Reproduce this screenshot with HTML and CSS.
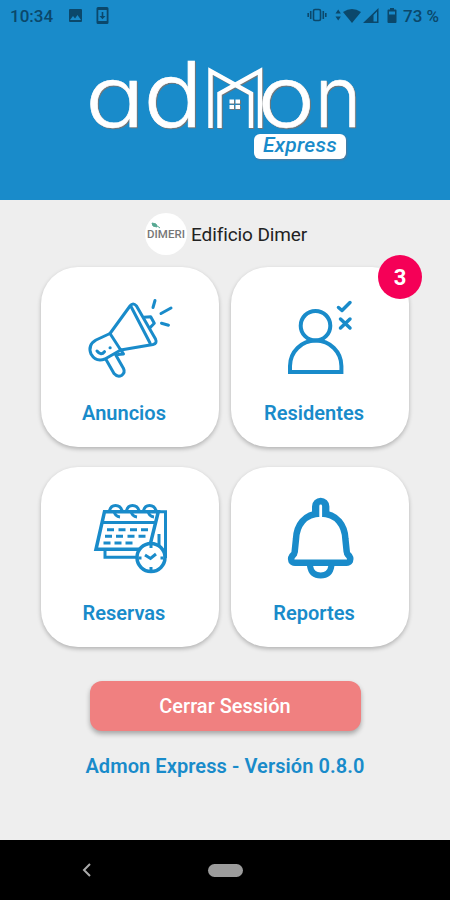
FILE: index.html
```html
<!DOCTYPE html>
<html lang="es">
<head>
    <meta charset="UTF-8">
    <meta name="viewport" content="width=device-width, initial-scale=1.0">
    <title>Admon Express</title>
    <link rel="stylesheet" href="styles.css">
</head>
<body>
    <header>
        <div class="status-bar">
            <span class="time">10:34</span>
            <svg class="status-left" width="44" height="20" viewBox="0 0 44 20">
                <path fill-rule="evenodd" d="M3 3h11q1 0 1 1v11q0 1-1 1H3q-1 0-1-1V4q0-1 1-1zM3 14h11l-3.500-5-2.500 3.500-2-2.500z"/>
                <path fill-rule="evenodd" d="M31 1h9q1.500 0 1.500 1.500v14q0 1.500-1.500 1.500h-9q-1.500 0-1.500-1.500v-14Q29.500 1 31 1zM31.300 4v11h8.400V4zM34.700 6h1.600v4h2.200l-3 3.300-3-3.300h2.200z"/>
            </svg>
            <svg class="status-right" width="92" height="20" viewBox="0 0 92 20">
                <g fill="none" stroke="currentColor" stroke-width="1.600">
                    <rect x="6.500" y="3.500" width="7" height="11" rx="1.500"/>
                    <path d="M3.700 5v8M1.200 7v4M16.300 5v8M18.800 7v4"/>
                </g>
                <path d="M28.500 7.500l2.700-4 2.700 4zM28.500 10.500l2.700 4 2.700-4z"/>
                <path d="M36 6q9-6 18 0L45 17z"/>
                <path fill-rule="evenodd" d="M56 17L71.500 2v15zM66.500 9v6.500H70V5.500z"/>
                <path fill-rule="evenodd" d="M83 2h4v1.500h1.500q1 0 1 1v11.500q0 1-1 1h-7q-1 0-1-1V4.500q0-1 1-1H83zM82 5.500v3h6v-3z"/>
            </svg>
            <span class="battery">73 %</span>
        </div>
        <div class="brand">
            <svg class="logo" width="270" height="78" viewBox="0 0 270 78">
                <text class="logo-letter" transform="translate(-4.800 73) scale(1.160 1)">a</text>
                <text class="logo-letter" transform="translate(53.500 73) scale(1.160 1.070)">d</text>
                <g class="logo-house">
                    <path d="M120.500 74V17L161 39.500V74"/>
                    <path d="M170 74V17l-40.500 22.500V74"/>
                    <path class="panes" d="M139.500 45.500h4.500v4h-4.500zM145.500 45.500h4.500v4h-4.500zM139.500 51h4.500v4h-4.500zM145.500 51h4.500v4h-4.500z"/>
                </g>
                <text class="logo-letter" transform="translate(167.500 73) scale(1.140 1)">o</text>
                <text class="logo-letter" transform="translate(224.500 73) scale(0.940 1)">n</text>
            </svg>
            <span class="express">Express</span>
        </div>
    </header>

    <main>
        <div class="building">
            <span class="avatar">
                <svg width="10" height="7" viewBox="0 0 10 7"><path d="M1 1l4 1 1 3-4-1zM5 3l4 3" fill="#56a892" stroke="#56a892"/></svg>
                <span>DIMERI</span>
            </span>
            <span class="building-name">Edificio Dimer</span>
        </div>

        <div class="menu">
            <!-- Anuncios -->
            <div class="card">
                <svg class="icon" width="90" height="90" viewBox="0 0 90 90">
                    <g stroke-width="3">
                        <path d="M25 41.500L45 14q3-4 6.500 0L70.500 47q2 4.500-2.500 5.500L35.700 58z"/>
                        <path d="M46 14.500L65 51"/>
                        <path d="M25 41.500L11 48Q2.500 53 6 62q5 8.500 14 5l15.700-9"/>
                        <path d="M21 67.500l8 14q3.500 4 7.500 2 4-3 2-7l-8-14"/>
                        <path d="M33 62.500l5.500-.5-2.500-4M59 25.300l6.700-.6 3.600 6.600-4.300 4.400"/>
                        <path d="M12 59q4 5 7.500.700M25 55.700h.2M70 8.500l-2 7M76 21.500l10-5.500M76.500 31.200l7 2"/>
                    </g>
                </svg>
                <span class="label">Anuncios</span>
            </div>
            <!-- Residentes -->
            <div class="card">
                <svg class="icon" width="90" height="90" viewBox="0 0 90 90">
                    <g stroke-width="4">
                        <circle cx="40.500" cy="33.700" r="14.800"/>
                        <path class="square" d="M15 80v-6a25.700 25.500 0 0 1 51.400 0v6z"/>
                        <path d="M63.500 15.500l3.500 3 8-8M65.500 27l9.500 9M75 27l-9.500 9" stroke-width="3.500"/>
                    </g>
                </svg>
                <span class="label">Residentes</span>
                <span class="badge">3</span>
            </div>
            <!-- Reservas -->
            <div class="card">
                <svg class="icon" width="90" height="90" viewBox="0 0 90 90">
                    <g class="square" stroke-width="3.500">
                        <path d="M19.500 19.700h53.800L64 57.300H11z"/>
                        <path d="M17 30.500h53M72 19.700h8.500V66M20 58v7.300h32M74 42v12" stroke-width="3"/>
                        <path d="M22 37.700h7M33.500 37.700h7M45 37.700h7M56 37.700h7M20 44.300h7M31 44.300h7M42.500 44.300h7M53.500 44.300h7M18.500 51h7M29.500 51h7M40.500 51h7" stroke-width="3"/>
                        <path d="M24.500 19q1-5.500 6-5.500t6.500 5M29 19q1 5.500 6 6M41.500 19q1-5.500 6-5.500t6.500 5M46 19q1 5.500 6 6M58.500 19q1-5.500 6-5.500t6.500 5M63 19q1 5.500 6 6" stroke-width="3"/>
                        <circle cx="66" cy="65.500" r="14" fill="#fff"/>
                        <path d="M60 63l5.500 3.500L71 62M66 53v3M66 75v3M53.500 66h3M75.500 66h3" stroke-width="3"/>
                    </g>
                </svg>
                <span class="label">Reservas</span>
            </div>
            <!-- Reportes -->
            <div class="card">
                <svg class="icon" width="90" height="90" viewBox="0 0 90 90">
                    <path d="M37 25V14.500a8.700 8.700 0 0 1 17.400 0V25z" fill="#198bca" stroke="none"/>
                    <path d="M45.700 21.500C29 21.500 21.500 34 21 47L19.500 61.500q-4.500 4-3 7.500 1 1.800 3.500 1.800h51.400q2.500 0 3.500-1.800 1.500-3.500-3-7.500L70.400 47C69.900 34 62.400 21.500 45.700 21.500z" stroke-width="6.500"/>
                    <path d="M21 66.500h49.400l-2-6H23z" fill="#fff" stroke="none"/>
                    <path d="M45.700 14v13" stroke="#fff" stroke-width="2.800"/>
                    <path d="M35 74q1.500 9.500 10.700 9.500T56.400 74" stroke-width="6"/>
                </svg>
                <span class="label">Reportes</span>
            </div>
        </div>

        <button type="button" class="logout">Cerrar Sessión</button>
        <p class="version">Admon Express - Versión 0.8.0</p>
    </main>

    <nav class="nav-bar">
        <svg class="back" width="12" height="16" viewBox="0 0 12 16"><path d="M9 2L3 8l6 6"/></svg>
        <span class="home"></span>
    </nav>
</body>
</html>
```
FILE: styles.css
```css
body {
    margin: 0;
    height: 900px;
    display: flex;
    flex-direction: column;
    font-family: Roboto, sans-serif;
    background-color: #eeeeee;
    overflow: hidden;
}

header {
    height: 200px;
    background-color: #198bca;
}

.status-bar {
    height: 32px;
    padding: 0 10px;
    box-sizing: border-box;
    display: flex;
    align-items: center;
    color: #0b486b;
    fill: #0b486b;
    font-size: 17px;
    font-weight: 500;
}

.status-left {
    margin-left: 14px;
}

.status-right {
    margin-left: auto;
}

.battery {
    margin-left: 4px;
    width: 37px;
    white-space: nowrap;
}

.brand {
    display: flex;
    flex-direction: column;
    padding: 22px 0 0 90px;
}

.logo {
    overflow: visible;
    fill: #fff;
    filter: drop-shadow(1.5px 1.5px 0.5px #70767a);
}

/* cv11 is the single-storey a */
.logo-letter {
    font-family: Inter, sans-serif;
    font-feature-settings: "cv11";
    font-weight: 300;
    font-size: 85px;
    stroke: #fff;
    stroke-width: 0.6;
}

.logo-house {
    fill: none;
    stroke: #fff;
    stroke-width: 4.5;
}

.panes {
    fill: #fff;
    stroke: none;
}

.express {
    width: 92px;
    height: 25px;
    margin: 2px 0 0 164px;
    border-radius: 6px;
    background-color: #fff;
    box-shadow: 1px 1px 2px #55799a;
    color: #198bca;
    font-size: 21px;
    font-style: italic;
    font-weight: 500;
    letter-spacing: 0.3px;
    line-height: 23px;
    text-align: center;
}

main {
    height: 640px;
    display: flex;
    flex-direction: column;
    align-items: center;
}

.building {
    width: 450px;
    height: 42px;
    margin-top: 13px;
    padding-left: 145px;
    box-sizing: border-box;
    display: flex;
    align-items: center;
    gap: 4px;
}

.avatar {
    width: 42px;
    height: 42px;
    border-radius: 50%;
    background-color: #fff;
    color: #777;
    font-size: 11.5px;
    font-weight: 500;
    line-height: 11px;
    display: flex;
    flex-direction: column;
    align-items: center;
}

.avatar svg {
    margin: 9px 20px 0 0;
}

.building-name {
    font-size: 19px;
    letter-spacing: -0.1px;
    color: #222;
}

.menu {
    display: grid;
    grid-template-columns: 178px 178px;
    grid-auto-rows: 180px;
    gap: 20px 12px;
    margin-top: 12px;
}

.card {
    position: relative;
    display: flex;
    flex-direction: column;
    align-items: center;
    border-radius: 37px;
    background-color: #fff;
    box-shadow: 0 2px 4px rgba(0, 0, 0, 0.25);
}

.icon {
    margin-top: 25px;
    fill: none;
    stroke: #198bca;
    stroke-linecap: round;
    stroke-linejoin: round;
}

.square {
    stroke-linecap: butt;
    stroke-linejoin: miter;
}

.label {
    margin: 20px 12px 0 0;
    color: #198bca;
    font-size: 20px;
    font-weight: 600;
    line-height: 23px;
}

.badge {
    position: absolute;
    top: -12px;
    right: -13px;
    width: 44px;
    height: 44px;
    border-radius: 50%;
    background-color: #f50057;
    color: #fff;
    font-size: 22px;
    font-weight: bold;
    line-height: 46px;
    text-align: center;
}

.logout {
    width: 271px;
    height: 50px;
    margin-top: 34px;
    border: none;
    border-radius: 12px;
    background-color: #f08080;
    box-shadow: 0 3px 5px rgba(0, 0, 0, 0.3);
    color: #fff;
    font-family: inherit;
    font-size: 20px;
    font-weight: 500;
}

.version {
    margin: 23px 0 0;
    color: #198bca;
    font-size: 20px;
    font-weight: 600;
    letter-spacing: 0.08px;
    line-height: 24px;
}

.nav-bar {
    height: 60px;
    padding-left: 81px;
    display: flex;
    align-items: center;
    background-color: #000;
}

.back {
    fill: none;
    stroke: #aaa;
    stroke-width: 2;
}

.home {
    width: 35px;
    height: 13px;
    margin-left: 115px;
    border-radius: 7px;
    background-color: #9c9c9c;
}
```
